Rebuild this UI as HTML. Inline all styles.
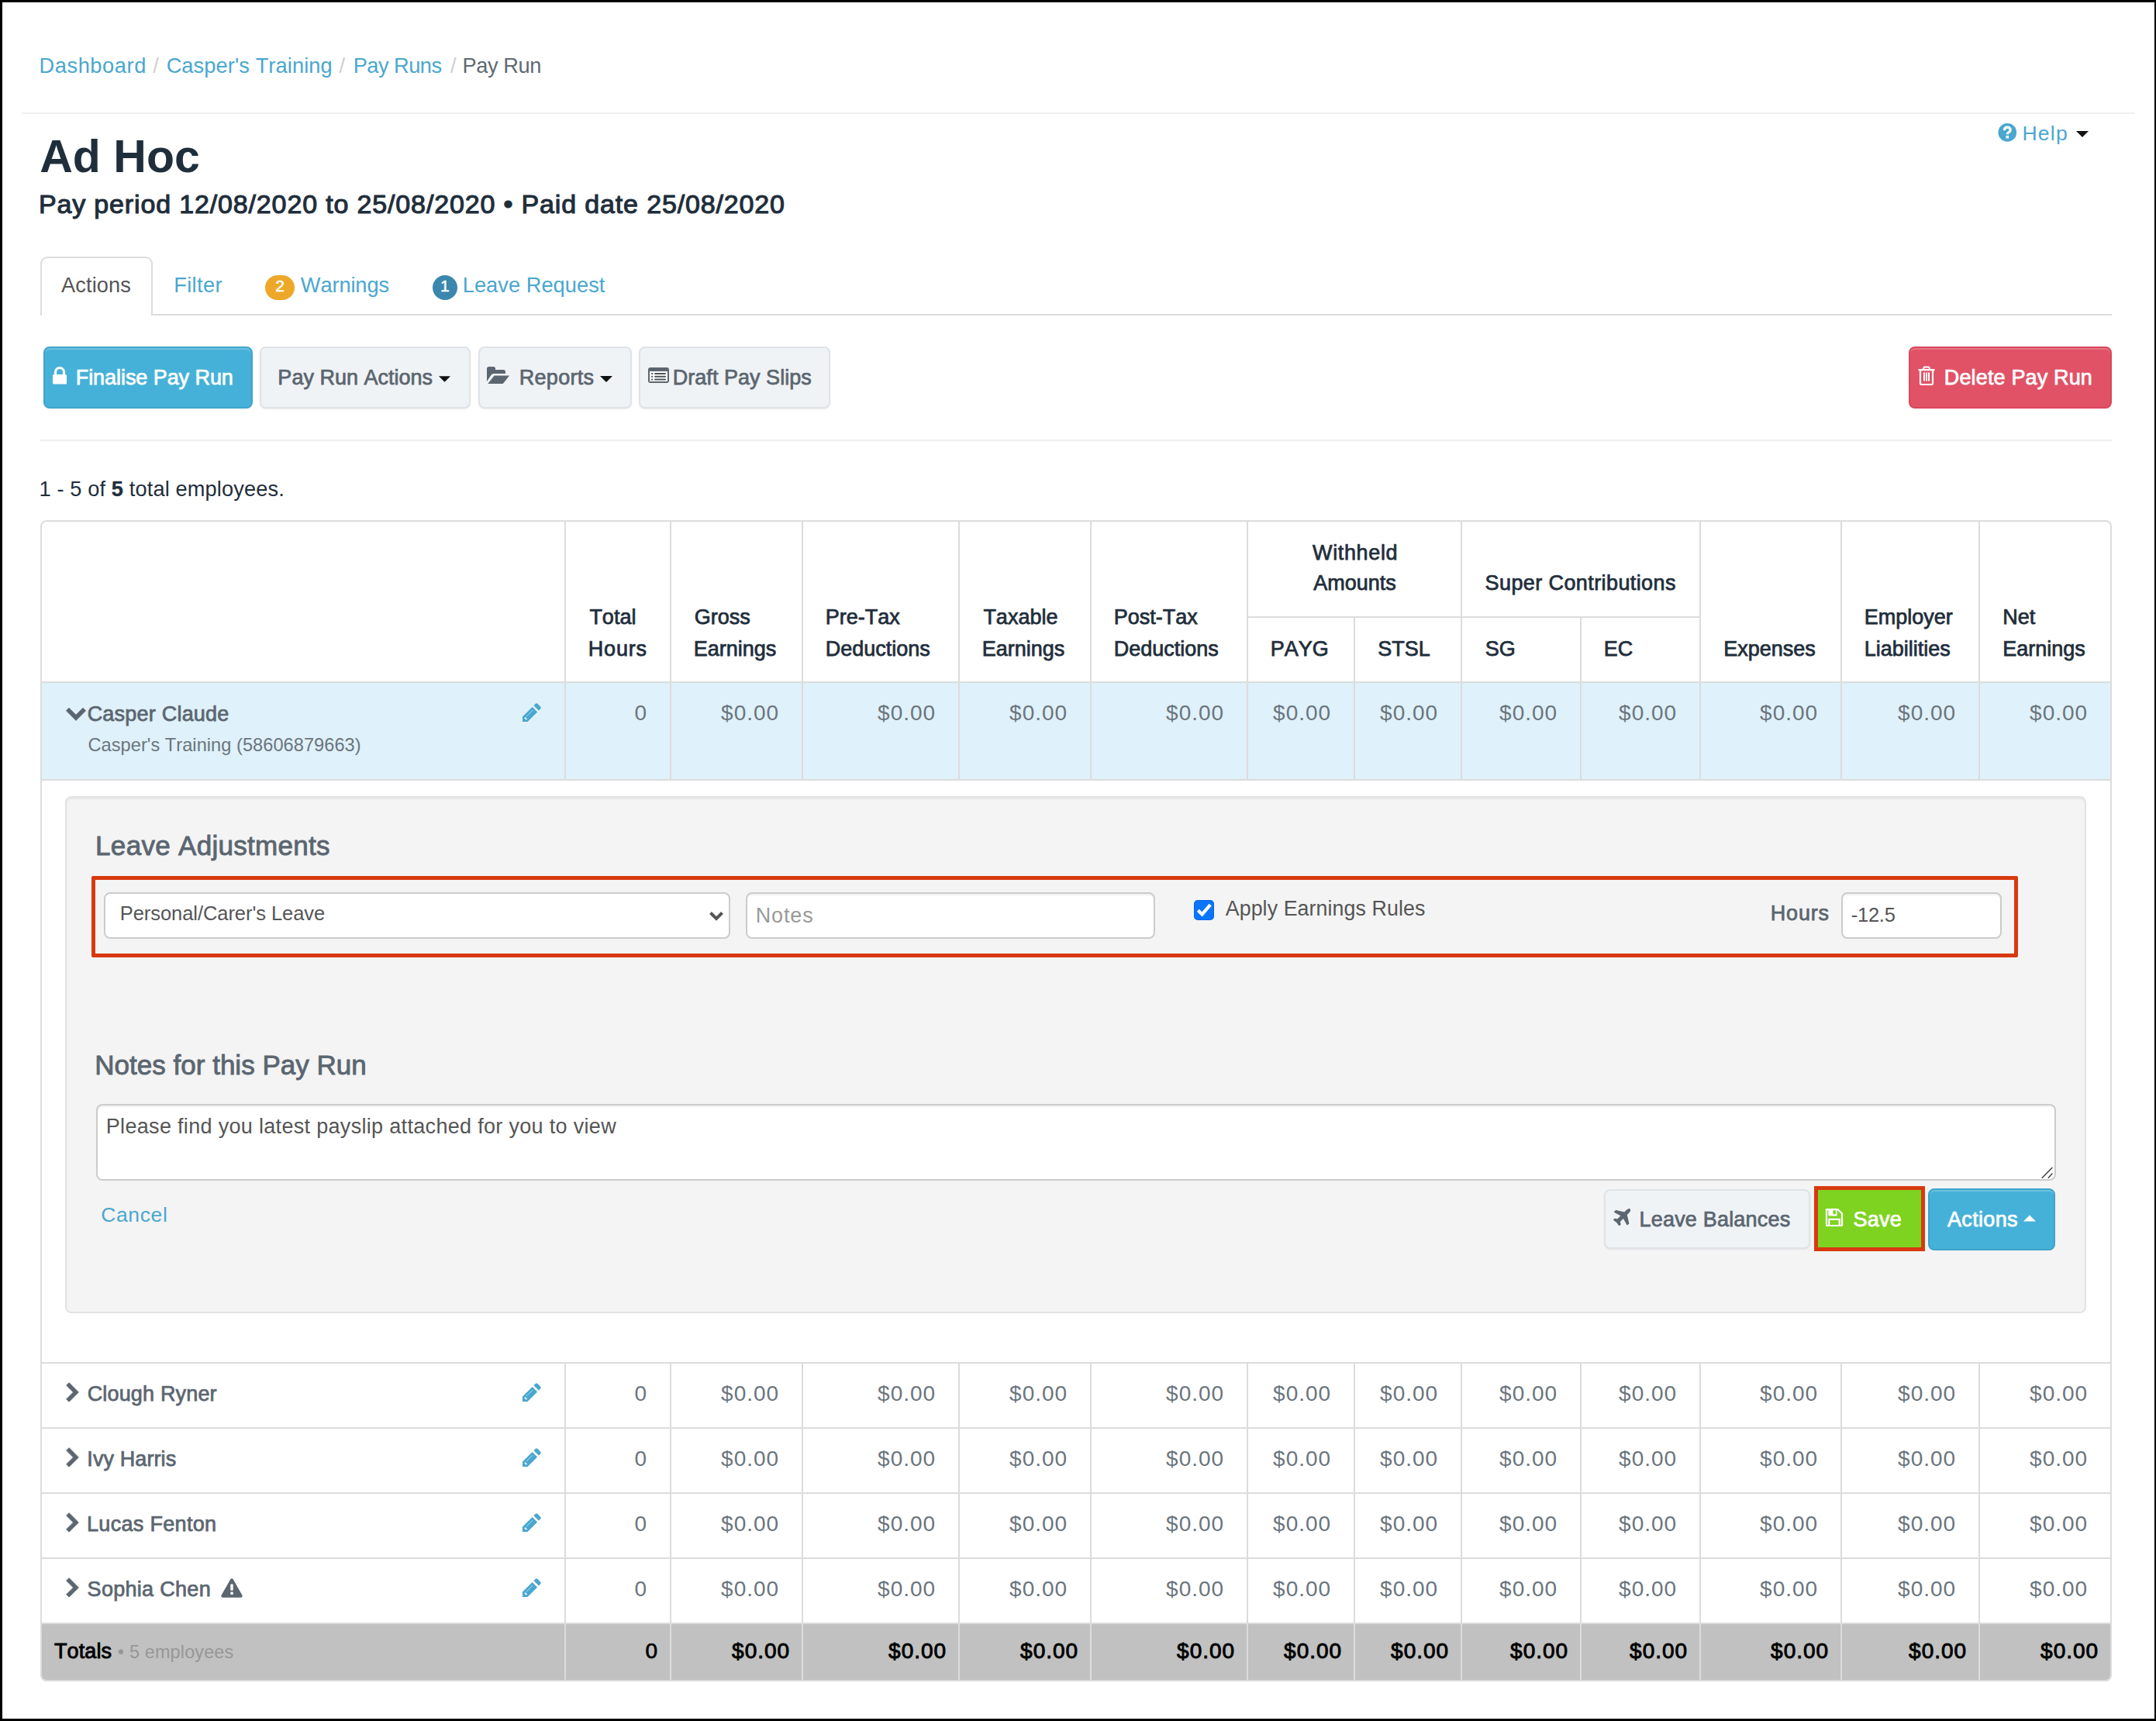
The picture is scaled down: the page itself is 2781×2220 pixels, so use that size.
<!DOCTYPE html>
<html><head><meta charset="utf-8"><title>Pay Run</title>
<style>
html,body{margin:0;padding:0;}
body{width:2781px;height:2220px;position:relative;overflow:hidden;background:#fff;font-family:"Liberation Sans", sans-serif;font-kerning:none;}
.t{position:absolute;white-space:nowrap;line-height:1;font-kerning:none;}
.r{position:absolute;}
.frame{position:absolute;left:0;top:0;width:2781px;height:2220px;box-sizing:border-box;border-style:solid;border-color:#000;border-width:3px 2px 3px 3px;z-index:10;}
</style></head><body>
<div class="t" style="left:50.46px;top:71.00px;font-size:27.2px;font-weight:normal;color:#4aa7cf;letter-spacing:0.609px;">Dashboard</div>
<div class="t" style="left:197.20px;top:71.00px;font-size:27.2px;font-weight:normal;color:#cfcfcf;letter-spacing:0.000px;">/</div>
<div class="t" style="left:214.64px;top:71.00px;font-size:27.2px;font-weight:normal;color:#4aa7cf;letter-spacing:0.115px;">Casper's Training</div>
<div class="t" style="left:437.50px;top:71.00px;font-size:27.2px;font-weight:normal;color:#cfcfcf;letter-spacing:0.000px;">/</div>
<div class="t" style="left:455.76px;top:71.00px;font-size:27.2px;font-weight:normal;color:#4aa7cf;letter-spacing:-0.521px;">Pay Runs</div>
<div class="t" style="left:581.00px;top:71.00px;font-size:27.2px;font-weight:normal;color:#cfcfcf;letter-spacing:0.000px;">/</div>
<div class="t" style="left:596.56px;top:71.00px;font-size:27.2px;font-weight:normal;color:#5f6a72;letter-spacing:-0.417px;">Pay Run</div>
<div class="r" style="left:28px;top:145px;width:2726px;height:2px;background:#eef0f2;"></div>
<div class="t" style="left:51.23px;top:173.00px;font-size:59px;font-weight:bold;color:#1f2e3b;letter-spacing:0.009px;">Ad Hoc</div>
<div class="t" style="left:49.90px;top:246.00px;font-size:34px;font-weight:normal;color:#1f2e3b;letter-spacing:0.850px;-webkit-text-stroke:1.1px #1f2e3b;">Pay period 12/08/2020 to 25/08/2020 &bull; Paid date 25/08/2020</div>
<svg class="r" style="left:2577px;top:159px;" width="25" height="25" viewBox="0 0 25 25"><circle cx="12.3" cy="11.9" r="11.8" fill="#4aa7cf"/><path d="M8.4 9.3C8.4 6.6 10.1 5.1 12.3 5.1 14.6 5.1 16.2 6.5 16.2 8.5 16.2 10.4 14.9 11.1 13.8 11.9 12.9 12.5 12.3 13 12.3 14.3" fill="none" stroke="#fff" stroke-width="3.3"/><rect x="10.5" y="16" width="3.6" height="3.5" fill="#fff"/></svg>
<div class="t" style="left:2608.41px;top:159.00px;font-size:26.5px;font-weight:normal;color:#4aa7cf;letter-spacing:1.263px;">Help</div>
<svg class="r" style="left:2678px;top:169px;" width="16" height="8" viewBox="0 0 16 8"><path d="M0 0h16L8 8z" fill="#111"/></svg>
<div class="r" style="left:52px;top:331px;width:145px;height:76px;box-sizing:border-box;border:2px solid #dddddd;border-bottom:none;border-radius:9px 9px 0 0;background:#fff;"></div>
<div class="r" style="left:197px;top:405px;width:2527px;height:2px;background:#dddddd;"></div>
<div class="t" style="left:78.93px;top:354.00px;font-size:27.2px;font-weight:normal;color:#555555;letter-spacing:0.145px;">Actions</div>
<div class="t" style="left:224.26px;top:354.00px;font-size:27.2px;font-weight:normal;color:#4aa7cf;letter-spacing:0.354px;">Filter</div>
<div class="r" style="left:342px;top:355px;width:38px;height:32px;box-sizing:border-box;border-radius:16px;background:#eea829;"></div>
<div class="t" style="left:355.17px;top:358.00px;font-size:21px;font-weight:normal;color:#ffffff;letter-spacing:0.000px;-webkit-text-stroke:0.5px #ffffff;">2</div>
<div class="t" style="left:387.86px;top:354.00px;font-size:27.2px;font-weight:normal;color:#4aa7cf;letter-spacing:-0.099px;">Warnings</div>
<div class="r" style="left:558px;top:355px;width:32px;height:32px;box-sizing:border-box;border-radius:16px;background:#3b87ae;"></div>
<div class="t" style="left:567.88px;top:358.00px;font-size:21px;font-weight:normal;color:#ffffff;letter-spacing:0.000px;-webkit-text-stroke:0.5px #ffffff;">1</div>
<div class="t" style="left:596.76px;top:354.00px;font-size:27.2px;font-weight:normal;color:#4aa7cf;letter-spacing:0.061px;">Leave Request</div>
<div class="r" style="left:56px;top:447px;width:270px;height:80px;box-sizing:border-box;background:#46b1d8;border-radius:8px;border:2px solid #3fa4ca;box-shadow:0 1px 2px rgba(0,0,0,.08);box-shadow:inset 0 2px 0 rgba(255,255,255,.22);"></div>
<svg class="r" style="left:67px;top:472px;" width="20" height="24" viewBox="0 0 20 24"><path d="M4.5 11V8a5.5 5.5 0 0 1 11 0v3" fill="none" stroke="#fff" stroke-width="3.2"/><rect x="1" y="11" width="18" height="12.5" rx="1.5" fill="#fff"/></svg>
<div class="t" style="left:97.77px;top:474.00px;font-size:27px;font-weight:normal;color:#ffffff;letter-spacing:-0.067px;-webkit-text-stroke:0.75px #ffffff;">Finalise Pay Run</div>
<div class="r" style="left:335px;top:447px;width:272px;height:80px;box-sizing:border-box;background:#f0f3f6;border-radius:8px;border:2px solid #dfe3e7;box-shadow:0 1px 2px rgba(0,0,0,.08);"></div>
<div class="t" style="left:358.37px;top:474.00px;font-size:27px;font-weight:normal;color:#5b6670;letter-spacing:0.008px;-webkit-text-stroke:0.75px #5b6670;">Pay Run Actions</div>
<svg class="r" style="left:566px;top:485px;" width="15" height="8" viewBox="0 0 16 8"><path d="M0 0h16L8 8z" fill="#111"/></svg>
<div class="r" style="left:617px;top:447px;width:198px;height:80px;box-sizing:border-box;background:#f0f3f6;border-radius:8px;border:2px solid #dfe3e7;box-shadow:0 1px 2px rgba(0,0,0,.08);"></div>
<svg class="r" style="left:627px;top:472px;" width="31" height="24" viewBox="0 0 31 24"><path d="M1 3.5C1 2 2 1 3.5 1h6C11 1 12 2 12 3.5V5h10.5C24 5 25 6 25 7.5V10H10C8 10 7 11 6 12.5L1 20z" fill="#5b6670"/><path d="M10.5 12.5h19.5L23 21.5c-.8 1-1.6 1.5-3 1.5H2.3z" fill="#5b6670"/></svg>
<div class="t" style="left:669.77px;top:474.00px;font-size:27px;font-weight:normal;color:#5b6670;letter-spacing:0.290px;-webkit-text-stroke:0.75px #5b6670;">Reports</div>
<svg class="r" style="left:774px;top:485px;" width="16" height="8" viewBox="0 0 16 8"><path d="M0 0h16L8 8z" fill="#111"/></svg>
<div class="r" style="left:824px;top:447px;width:247px;height:80px;box-sizing:border-box;background:#f0f3f6;border-radius:8px;border:2px solid #dfe3e7;box-shadow:0 1px 2px rgba(0,0,0,.08);"></div>
<svg class="r" style="left:835px;top:473px;" width="29" height="22" viewBox="0 0 29 22"><rect x="1" y="1" width="27" height="20" rx="3" fill="#5b6670"/><rect x="3" y="6" width="23" height="13" fill="#fff"/><rect x="5.2" y="8" width="2" height="2" fill="#4d555c"/><rect x="9" y="8" width="15" height="2" rx="1" fill="#4d555c"/><rect x="5.2" y="11.8" width="2" height="2" fill="#4d555c"/><rect x="9" y="11.8" width="15" height="2" rx="1" fill="#4d555c"/><rect x="5.2" y="15.6" width="2" height="2" fill="#4d555c"/><rect x="9" y="15.6" width="15" height="2" rx="1" fill="#4d555c"/></svg>
<div class="t" style="left:867.77px;top:474.00px;font-size:27px;font-weight:normal;color:#5b6670;letter-spacing:0.029px;-webkit-text-stroke:0.75px #5b6670;">Draft Pay Slips</div>
<div class="r" style="left:2462px;top:447px;width:262px;height:80px;box-sizing:border-box;background:#e15266;border-radius:8px;border:2px solid #d8485c;box-shadow:0 1px 2px rgba(0,0,0,.08);box-shadow:inset 0 2px 0 rgba(255,255,255,.2);"></div>
<svg class="r" style="left:2474px;top:472px;" width="22" height="25" viewBox="0 0 22 25"><path d="M6.5 4.5L8 1.5h6l1.5 3" fill="none" stroke="#fff" stroke-width="2"/><rect x="0.5" y="4" width="21" height="2.2" fill="#fff"/><path d="M3 6v16.5c0 1 .8 1.5 1.5 1.5h13c.8 0 1.5-.5 1.5-1.5V6" fill="none" stroke="#fff" stroke-width="2.2"/><rect x="7" y="8.5" width="2" height="11" fill="#fff"/><rect x="10" y="8.5" width="2" height="11" fill="#fff"/><rect x="13" y="8.5" width="2" height="11" fill="#fff"/></svg>
<div class="t" style="left:2507.77px;top:474.00px;font-size:27px;font-weight:normal;color:#ffffff;letter-spacing:0.152px;-webkit-text-stroke:0.75px #ffffff;">Delete Pay Run</div>
<div class="r" style="left:52px;top:567px;width:2672px;height:2px;background:#eeeeee;"></div>
<div class="t" style="left:50.46px;top:617.00px;font-size:27.2px;font-weight:normal;color:#1f2e3b;letter-spacing:0.133px;">1 - 5 of <b style="-webkit-text-stroke:0.3px #1f2e3b">5</b> total employees.</div>
<div class="r" style="left:52px;top:881px;width:2672px;height:124px;background:#dff1fa;"></div>
<div class="r" style="left:52px;top:2095px;width:2672px;height:72px;background:#c1c1c1;border-radius:0 0 8px 8px;"></div>
<div class="r" style="left:52px;top:671px;width:2672px;height:1498px;box-sizing:border-box;border:2px solid #dcdcdc;border-radius:8px;"></div>
<div class="r" style="left:1608px;top:795px;width:584px;height:2px;background:#dcdcdc;"></div>
<div class="r" style="left:52px;top:879px;width:2672px;height:2px;background:#dcdcdc;"></div>
<div class="r" style="left:52px;top:1005px;width:2672px;height:2px;background:#dcdcdc;"></div>
<div class="r" style="left:52px;top:1757px;width:2672px;height:2px;background:#dcdcdc;"></div>
<div class="r" style="left:52px;top:1841px;width:2672px;height:2px;background:#dcdcdc;"></div>
<div class="r" style="left:52px;top:1925px;width:2672px;height:2px;background:#dcdcdc;"></div>
<div class="r" style="left:52px;top:2009px;width:2672px;height:2px;background:#dcdcdc;"></div>
<div class="r" style="left:52px;top:2093px;width:2672px;height:2px;background:#dcdcdc;"></div>
<div class="r" style="left:728px;top:673px;width:2px;height:206px;background:#dcdcdc;"></div>
<div class="r" style="left:728px;top:881px;width:2px;height:124px;background:#dcdcdc;"></div>
<div class="r" style="left:728px;top:1759px;width:2px;height:408px;background:#dcdcdc;"></div>
<div class="r" style="left:864px;top:673px;width:2px;height:206px;background:#dcdcdc;"></div>
<div class="r" style="left:864px;top:881px;width:2px;height:124px;background:#dcdcdc;"></div>
<div class="r" style="left:864px;top:1759px;width:2px;height:408px;background:#dcdcdc;"></div>
<div class="r" style="left:1034px;top:673px;width:2px;height:206px;background:#dcdcdc;"></div>
<div class="r" style="left:1034px;top:881px;width:2px;height:124px;background:#dcdcdc;"></div>
<div class="r" style="left:1034px;top:1759px;width:2px;height:408px;background:#dcdcdc;"></div>
<div class="r" style="left:1236px;top:673px;width:2px;height:206px;background:#dcdcdc;"></div>
<div class="r" style="left:1236px;top:881px;width:2px;height:124px;background:#dcdcdc;"></div>
<div class="r" style="left:1236px;top:1759px;width:2px;height:408px;background:#dcdcdc;"></div>
<div class="r" style="left:1406px;top:673px;width:2px;height:206px;background:#dcdcdc;"></div>
<div class="r" style="left:1406px;top:881px;width:2px;height:124px;background:#dcdcdc;"></div>
<div class="r" style="left:1406px;top:1759px;width:2px;height:408px;background:#dcdcdc;"></div>
<div class="r" style="left:1608px;top:673px;width:2px;height:206px;background:#dcdcdc;"></div>
<div class="r" style="left:1608px;top:881px;width:2px;height:124px;background:#dcdcdc;"></div>
<div class="r" style="left:1608px;top:1759px;width:2px;height:408px;background:#dcdcdc;"></div>
<div class="r" style="left:1746px;top:797px;width:2px;height:82px;background:#dcdcdc;"></div>
<div class="r" style="left:1746px;top:881px;width:2px;height:124px;background:#dcdcdc;"></div>
<div class="r" style="left:1746px;top:1759px;width:2px;height:408px;background:#dcdcdc;"></div>
<div class="r" style="left:1884px;top:673px;width:2px;height:206px;background:#dcdcdc;"></div>
<div class="r" style="left:1884px;top:881px;width:2px;height:124px;background:#dcdcdc;"></div>
<div class="r" style="left:1884px;top:1759px;width:2px;height:408px;background:#dcdcdc;"></div>
<div class="r" style="left:2038px;top:797px;width:2px;height:82px;background:#dcdcdc;"></div>
<div class="r" style="left:2038px;top:881px;width:2px;height:124px;background:#dcdcdc;"></div>
<div class="r" style="left:2038px;top:1759px;width:2px;height:408px;background:#dcdcdc;"></div>
<div class="r" style="left:2192px;top:673px;width:2px;height:206px;background:#dcdcdc;"></div>
<div class="r" style="left:2192px;top:881px;width:2px;height:124px;background:#dcdcdc;"></div>
<div class="r" style="left:2192px;top:1759px;width:2px;height:408px;background:#dcdcdc;"></div>
<div class="r" style="left:2374px;top:673px;width:2px;height:206px;background:#dcdcdc;"></div>
<div class="r" style="left:2374px;top:881px;width:2px;height:124px;background:#dcdcdc;"></div>
<div class="r" style="left:2374px;top:1759px;width:2px;height:408px;background:#dcdcdc;"></div>
<div class="r" style="left:2552px;top:673px;width:2px;height:206px;background:#dcdcdc;"></div>
<div class="r" style="left:2552px;top:881px;width:2px;height:124px;background:#dcdcdc;"></div>
<div class="r" style="left:2552px;top:1759px;width:2px;height:408px;background:#dcdcdc;"></div>
<div class="t" style="left:760.39px;top:783.00px;font-size:27px;font-weight:normal;color:#1f2e3b;letter-spacing:0.000px;-webkit-text-stroke:0.75px #1f2e3b;">Total</div>
<div class="t" style="left:758.77px;top:824.00px;font-size:27px;font-weight:normal;color:#1f2e3b;letter-spacing:0.804px;-webkit-text-stroke:0.75px #1f2e3b;">Hours</div>
<div class="t" style="left:895.65px;top:783.00px;font-size:27px;font-weight:normal;color:#1f2e3b;letter-spacing:0.000px;-webkit-text-stroke:0.75px #1f2e3b;">Gross</div>
<div class="t" style="left:894.77px;top:824.00px;font-size:27px;font-weight:normal;color:#1f2e3b;letter-spacing:0.000px;-webkit-text-stroke:0.75px #1f2e3b;">Earnings</div>
<div class="t" style="left:1064.77px;top:783.00px;font-size:27px;font-weight:normal;color:#1f2e3b;letter-spacing:0.000px;-webkit-text-stroke:0.75px #1f2e3b;">Pre-Tax</div>
<div class="t" style="left:1064.77px;top:824.00px;font-size:27px;font-weight:normal;color:#1f2e3b;letter-spacing:0.000px;-webkit-text-stroke:0.75px #1f2e3b;">Deductions</div>
<div class="t" style="left:1268.39px;top:783.00px;font-size:27px;font-weight:normal;color:#1f2e3b;letter-spacing:0.000px;-webkit-text-stroke:0.75px #1f2e3b;">Taxable</div>
<div class="t" style="left:1266.77px;top:824.00px;font-size:27px;font-weight:normal;color:#1f2e3b;letter-spacing:0.000px;-webkit-text-stroke:0.75px #1f2e3b;">Earnings</div>
<div class="t" style="left:1436.77px;top:783.00px;font-size:27px;font-weight:normal;color:#1f2e3b;letter-spacing:0.000px;-webkit-text-stroke:0.75px #1f2e3b;">Post-Tax</div>
<div class="t" style="left:1436.77px;top:824.00px;font-size:27px;font-weight:normal;color:#1f2e3b;letter-spacing:0.000px;-webkit-text-stroke:0.75px #1f2e3b;">Deductions</div>
<div class="t" style="left:1693.12px;top:700.00px;font-size:27px;font-weight:normal;color:#1f2e3b;letter-spacing:0.623px;-webkit-text-stroke:0.75px #1f2e3b;">Withheld</div>
<div class="t" style="left:1694.21px;top:739.00px;font-size:27px;font-weight:normal;color:#1f2e3b;letter-spacing:0.000px;-webkit-text-stroke:0.75px #1f2e3b;">Amounts</div>
<div class="t" style="left:1915.59px;top:739.00px;font-size:27px;font-weight:normal;color:#1f2e3b;letter-spacing:0.401px;-webkit-text-stroke:0.75px #1f2e3b;">Super Contributions</div>
<div class="t" style="left:1638.77px;top:824.00px;font-size:27px;font-weight:normal;color:#1f2e3b;letter-spacing:0.000px;-webkit-text-stroke:0.75px #1f2e3b;">PAYG</div>
<div class="t" style="left:1777.29px;top:824.00px;font-size:27px;font-weight:normal;color:#1f2e3b;letter-spacing:0.000px;-webkit-text-stroke:0.75px #1f2e3b;">STSL</div>
<div class="t" style="left:1915.79px;top:824.00px;font-size:27px;font-weight:normal;color:#1f2e3b;letter-spacing:0.000px;-webkit-text-stroke:0.75px #1f2e3b;">SG</div>
<div class="t" style="left:2068.77px;top:824.00px;font-size:27px;font-weight:normal;color:#1f2e3b;letter-spacing:0.000px;-webkit-text-stroke:0.75px #1f2e3b;">EC</div>
<div class="t" style="left:2223.27px;top:824.00px;font-size:27px;font-weight:normal;color:#1f2e3b;letter-spacing:0.000px;-webkit-text-stroke:0.75px #1f2e3b;">Expenses</div>
<div class="t" style="left:2404.77px;top:783.00px;font-size:27px;font-weight:normal;color:#1f2e3b;letter-spacing:0.000px;-webkit-text-stroke:0.75px #1f2e3b;">Employer</div>
<div class="t" style="left:2404.77px;top:824.00px;font-size:27px;font-weight:normal;color:#1f2e3b;letter-spacing:0.000px;-webkit-text-stroke:0.75px #1f2e3b;">Liabilities</div>
<div class="t" style="left:2583.27px;top:783.00px;font-size:27px;font-weight:normal;color:#1f2e3b;letter-spacing:0.000px;-webkit-text-stroke:0.75px #1f2e3b;">Net</div>
<div class="t" style="left:2583.27px;top:824.00px;font-size:27px;font-weight:normal;color:#1f2e3b;letter-spacing:0.000px;-webkit-text-stroke:0.75px #1f2e3b;">Earnings</div>
<svg class="r" style="left:84px;top:911px;" width="28" height="20" viewBox="0 0 28 20"><path d="M1.4 5.7L4.9 2.2 14 11.2 23 2.2 26.6 5.8 14 18.4z" fill="#5b6670" stroke="#5b6670" stroke-width="0.8" stroke-linejoin="round"/></svg>
<div class="t" style="left:112.65px;top:908.00px;font-size:27px;font-weight:normal;color:#5b6670;letter-spacing:0.217px;-webkit-text-stroke:0.75px #5b6670;">Casper Claude</div>
<div class="t" style="left:113.52px;top:950.00px;font-size:23.6px;font-weight:normal;color:#6b757d;letter-spacing:0.044px;">Casper's Training (58606879663)</div>
<svg class="r" style="left:674px;top:907px;" width="24" height="24" viewBox="0 0 24 24"><path d="M0 24V17.5L12.6 4.9 19.1 11.4 6.5 24z" fill="#4aa7cf"/><path d="M14.4 3.1l2.1-2.1c.9-.9 2.2-.9 3.1 0l3.4 3.4c.9.9.9 2.2 0 3.1l-2.1 2.1z" fill="#4aa7cf"/><path d="M2.2 19.2l1.3-1.3 2.6 2.6-1.3 1.3z" fill="#e8f8fc"/><path d="M5 17.2L13 9.2" stroke="#bff3ff" stroke-width="0.8"/></svg>
<div class="t" style="left:818.51px;top:906.00px;font-size:28px;font-weight:normal;color:#6b757d;letter-spacing:0.000px;">0</div>
<div class="t" style="left:930.12px;top:906.00px;font-size:28px;font-weight:normal;color:#6b757d;letter-spacing:1.000px;">$0.00</div>
<div class="t" style="left:1132.12px;top:906.00px;font-size:28px;font-weight:normal;color:#6b757d;letter-spacing:1.000px;">$0.00</div>
<div class="t" style="left:1302.12px;top:906.00px;font-size:28px;font-weight:normal;color:#6b757d;letter-spacing:1.000px;">$0.00</div>
<div class="t" style="left:1504.12px;top:906.00px;font-size:28px;font-weight:normal;color:#6b757d;letter-spacing:1.000px;">$0.00</div>
<div class="t" style="left:1642.12px;top:906.00px;font-size:28px;font-weight:normal;color:#6b757d;letter-spacing:1.000px;">$0.00</div>
<div class="t" style="left:1780.12px;top:906.00px;font-size:28px;font-weight:normal;color:#6b757d;letter-spacing:1.000px;">$0.00</div>
<div class="t" style="left:1934.12px;top:906.00px;font-size:28px;font-weight:normal;color:#6b757d;letter-spacing:1.000px;">$0.00</div>
<div class="t" style="left:2088.12px;top:906.00px;font-size:28px;font-weight:normal;color:#6b757d;letter-spacing:1.000px;">$0.00</div>
<div class="t" style="left:2270.12px;top:906.00px;font-size:28px;font-weight:normal;color:#6b757d;letter-spacing:1.000px;">$0.00</div>
<div class="t" style="left:2448.12px;top:906.00px;font-size:28px;font-weight:normal;color:#6b757d;letter-spacing:1.000px;">$0.00</div>
<div class="t" style="left:2618.12px;top:906.00px;font-size:28px;font-weight:normal;color:#6b757d;letter-spacing:1.000px;">$0.00</div>
<svg class="r" style="left:84px;top:1782.9px;" width="20" height="27" viewBox="0 0 20 27"><path d="M1.6 4.1L5.1 0.6 17.4 12.9 5.1 25.2 1.6 21.8 10.5 12.9z" fill="#5b6670" stroke="#5b6670" stroke-width="0.8" stroke-linejoin="round"/></svg>
<div class="t" style="left:112.65px;top:1785.00px;font-size:27px;font-weight:normal;color:#5b6670;letter-spacing:0.168px;-webkit-text-stroke:0.75px #5b6670;">Clough Ryner</div>
<svg class="r" style="left:674px;top:1784px;" width="24" height="24" viewBox="0 0 24 24"><path d="M0 24V17.5L12.6 4.9 19.1 11.4 6.5 24z" fill="#4aa7cf"/><path d="M14.4 3.1l2.1-2.1c.9-.9 2.2-.9 3.1 0l3.4 3.4c.9.9.9 2.2 0 3.1l-2.1 2.1z" fill="#4aa7cf"/><path d="M2.2 19.2l1.3-1.3 2.6 2.6-1.3 1.3z" fill="#e8f8fc"/><path d="M5 17.2L13 9.2" stroke="#bff3ff" stroke-width="0.8"/></svg>
<div class="t" style="left:818.51px;top:1784.00px;font-size:28px;font-weight:normal;color:#6b757d;letter-spacing:0.000px;">0</div>
<div class="t" style="left:930.12px;top:1784.00px;font-size:28px;font-weight:normal;color:#6b757d;letter-spacing:1.000px;">$0.00</div>
<div class="t" style="left:1132.12px;top:1784.00px;font-size:28px;font-weight:normal;color:#6b757d;letter-spacing:1.000px;">$0.00</div>
<div class="t" style="left:1302.12px;top:1784.00px;font-size:28px;font-weight:normal;color:#6b757d;letter-spacing:1.000px;">$0.00</div>
<div class="t" style="left:1504.12px;top:1784.00px;font-size:28px;font-weight:normal;color:#6b757d;letter-spacing:1.000px;">$0.00</div>
<div class="t" style="left:1642.12px;top:1784.00px;font-size:28px;font-weight:normal;color:#6b757d;letter-spacing:1.000px;">$0.00</div>
<div class="t" style="left:1780.12px;top:1784.00px;font-size:28px;font-weight:normal;color:#6b757d;letter-spacing:1.000px;">$0.00</div>
<div class="t" style="left:1934.12px;top:1784.00px;font-size:28px;font-weight:normal;color:#6b757d;letter-spacing:1.000px;">$0.00</div>
<div class="t" style="left:2088.12px;top:1784.00px;font-size:28px;font-weight:normal;color:#6b757d;letter-spacing:1.000px;">$0.00</div>
<div class="t" style="left:2270.12px;top:1784.00px;font-size:28px;font-weight:normal;color:#6b757d;letter-spacing:1.000px;">$0.00</div>
<div class="t" style="left:2448.12px;top:1784.00px;font-size:28px;font-weight:normal;color:#6b757d;letter-spacing:1.000px;">$0.00</div>
<div class="t" style="left:2618.12px;top:1784.00px;font-size:28px;font-weight:normal;color:#6b757d;letter-spacing:1.000px;">$0.00</div>
<svg class="r" style="left:84px;top:1867.0px;" width="20" height="27" viewBox="0 0 20 27"><path d="M1.6 4.1L5.1 0.6 17.4 12.9 5.1 25.2 1.6 21.8 10.5 12.9z" fill="#5b6670" stroke="#5b6670" stroke-width="0.8" stroke-linejoin="round"/></svg>
<div class="t" style="left:112.30px;top:1869.00px;font-size:27px;font-weight:normal;color:#5b6670;letter-spacing:0.100px;-webkit-text-stroke:0.75px #5b6670;">Ivy Harris</div>
<svg class="r" style="left:674px;top:1868px;" width="24" height="24" viewBox="0 0 24 24"><path d="M0 24V17.5L12.6 4.9 19.1 11.4 6.5 24z" fill="#4aa7cf"/><path d="M14.4 3.1l2.1-2.1c.9-.9 2.2-.9 3.1 0l3.4 3.4c.9.9.9 2.2 0 3.1l-2.1 2.1z" fill="#4aa7cf"/><path d="M2.2 19.2l1.3-1.3 2.6 2.6-1.3 1.3z" fill="#e8f8fc"/><path d="M5 17.2L13 9.2" stroke="#bff3ff" stroke-width="0.8"/></svg>
<div class="t" style="left:818.51px;top:1868.00px;font-size:28px;font-weight:normal;color:#6b757d;letter-spacing:0.000px;">0</div>
<div class="t" style="left:930.12px;top:1868.00px;font-size:28px;font-weight:normal;color:#6b757d;letter-spacing:1.000px;">$0.00</div>
<div class="t" style="left:1132.12px;top:1868.00px;font-size:28px;font-weight:normal;color:#6b757d;letter-spacing:1.000px;">$0.00</div>
<div class="t" style="left:1302.12px;top:1868.00px;font-size:28px;font-weight:normal;color:#6b757d;letter-spacing:1.000px;">$0.00</div>
<div class="t" style="left:1504.12px;top:1868.00px;font-size:28px;font-weight:normal;color:#6b757d;letter-spacing:1.000px;">$0.00</div>
<div class="t" style="left:1642.12px;top:1868.00px;font-size:28px;font-weight:normal;color:#6b757d;letter-spacing:1.000px;">$0.00</div>
<div class="t" style="left:1780.12px;top:1868.00px;font-size:28px;font-weight:normal;color:#6b757d;letter-spacing:1.000px;">$0.00</div>
<div class="t" style="left:1934.12px;top:1868.00px;font-size:28px;font-weight:normal;color:#6b757d;letter-spacing:1.000px;">$0.00</div>
<div class="t" style="left:2088.12px;top:1868.00px;font-size:28px;font-weight:normal;color:#6b757d;letter-spacing:1.000px;">$0.00</div>
<div class="t" style="left:2270.12px;top:1868.00px;font-size:28px;font-weight:normal;color:#6b757d;letter-spacing:1.000px;">$0.00</div>
<div class="t" style="left:2448.12px;top:1868.00px;font-size:28px;font-weight:normal;color:#6b757d;letter-spacing:1.000px;">$0.00</div>
<div class="t" style="left:2618.12px;top:1868.00px;font-size:28px;font-weight:normal;color:#6b757d;letter-spacing:1.000px;">$0.00</div>
<svg class="r" style="left:84px;top:1950.8px;" width="20" height="27" viewBox="0 0 20 27"><path d="M1.6 4.1L5.1 0.6 17.4 12.9 5.1 25.2 1.6 21.8 10.5 12.9z" fill="#5b6670" stroke="#5b6670" stroke-width="0.8" stroke-linejoin="round"/></svg>
<div class="t" style="left:111.97px;top:1953.00px;font-size:27px;font-weight:normal;color:#5b6670;letter-spacing:0.324px;-webkit-text-stroke:0.75px #5b6670;">Lucas Fenton</div>
<svg class="r" style="left:674px;top:1952px;" width="24" height="24" viewBox="0 0 24 24"><path d="M0 24V17.5L12.6 4.9 19.1 11.4 6.5 24z" fill="#4aa7cf"/><path d="M14.4 3.1l2.1-2.1c.9-.9 2.2-.9 3.1 0l3.4 3.4c.9.9.9 2.2 0 3.1l-2.1 2.1z" fill="#4aa7cf"/><path d="M2.2 19.2l1.3-1.3 2.6 2.6-1.3 1.3z" fill="#e8f8fc"/><path d="M5 17.2L13 9.2" stroke="#bff3ff" stroke-width="0.8"/></svg>
<div class="t" style="left:818.51px;top:1952.00px;font-size:28px;font-weight:normal;color:#6b757d;letter-spacing:0.000px;">0</div>
<div class="t" style="left:930.12px;top:1952.00px;font-size:28px;font-weight:normal;color:#6b757d;letter-spacing:1.000px;">$0.00</div>
<div class="t" style="left:1132.12px;top:1952.00px;font-size:28px;font-weight:normal;color:#6b757d;letter-spacing:1.000px;">$0.00</div>
<div class="t" style="left:1302.12px;top:1952.00px;font-size:28px;font-weight:normal;color:#6b757d;letter-spacing:1.000px;">$0.00</div>
<div class="t" style="left:1504.12px;top:1952.00px;font-size:28px;font-weight:normal;color:#6b757d;letter-spacing:1.000px;">$0.00</div>
<div class="t" style="left:1642.12px;top:1952.00px;font-size:28px;font-weight:normal;color:#6b757d;letter-spacing:1.000px;">$0.00</div>
<div class="t" style="left:1780.12px;top:1952.00px;font-size:28px;font-weight:normal;color:#6b757d;letter-spacing:1.000px;">$0.00</div>
<div class="t" style="left:1934.12px;top:1952.00px;font-size:28px;font-weight:normal;color:#6b757d;letter-spacing:1.000px;">$0.00</div>
<div class="t" style="left:2088.12px;top:1952.00px;font-size:28px;font-weight:normal;color:#6b757d;letter-spacing:1.000px;">$0.00</div>
<div class="t" style="left:2270.12px;top:1952.00px;font-size:28px;font-weight:normal;color:#6b757d;letter-spacing:1.000px;">$0.00</div>
<div class="t" style="left:2448.12px;top:1952.00px;font-size:28px;font-weight:normal;color:#6b757d;letter-spacing:1.000px;">$0.00</div>
<div class="t" style="left:2618.12px;top:1952.00px;font-size:28px;font-weight:normal;color:#6b757d;letter-spacing:1.000px;">$0.00</div>
<svg class="r" style="left:84px;top:2034.8px;" width="20" height="27" viewBox="0 0 20 27"><path d="M1.6 4.1L5.1 0.6 17.4 12.9 5.1 25.2 1.6 21.8 10.5 12.9z" fill="#5b6670" stroke="#5b6670" stroke-width="0.8" stroke-linejoin="round"/></svg>
<div class="t" style="left:112.58px;top:2037.00px;font-size:27px;font-weight:normal;color:#5b6670;letter-spacing:0.298px;-webkit-text-stroke:0.75px #5b6670;">Sophia Chen</div>
<svg class="r" style="left:674px;top:2036px;" width="24" height="24" viewBox="0 0 24 24"><path d="M0 24V17.5L12.6 4.9 19.1 11.4 6.5 24z" fill="#4aa7cf"/><path d="M14.4 3.1l2.1-2.1c.9-.9 2.2-.9 3.1 0l3.4 3.4c.9.9.9 2.2 0 3.1l-2.1 2.1z" fill="#4aa7cf"/><path d="M2.2 19.2l1.3-1.3 2.6 2.6-1.3 1.3z" fill="#e8f8fc"/><path d="M5 17.2L13 9.2" stroke="#bff3ff" stroke-width="0.8"/></svg>
<div class="t" style="left:818.51px;top:2036.00px;font-size:28px;font-weight:normal;color:#6b757d;letter-spacing:0.000px;">0</div>
<div class="t" style="left:930.12px;top:2036.00px;font-size:28px;font-weight:normal;color:#6b757d;letter-spacing:1.000px;">$0.00</div>
<div class="t" style="left:1132.12px;top:2036.00px;font-size:28px;font-weight:normal;color:#6b757d;letter-spacing:1.000px;">$0.00</div>
<div class="t" style="left:1302.12px;top:2036.00px;font-size:28px;font-weight:normal;color:#6b757d;letter-spacing:1.000px;">$0.00</div>
<div class="t" style="left:1504.12px;top:2036.00px;font-size:28px;font-weight:normal;color:#6b757d;letter-spacing:1.000px;">$0.00</div>
<div class="t" style="left:1642.12px;top:2036.00px;font-size:28px;font-weight:normal;color:#6b757d;letter-spacing:1.000px;">$0.00</div>
<div class="t" style="left:1780.12px;top:2036.00px;font-size:28px;font-weight:normal;color:#6b757d;letter-spacing:1.000px;">$0.00</div>
<div class="t" style="left:1934.12px;top:2036.00px;font-size:28px;font-weight:normal;color:#6b757d;letter-spacing:1.000px;">$0.00</div>
<div class="t" style="left:2088.12px;top:2036.00px;font-size:28px;font-weight:normal;color:#6b757d;letter-spacing:1.000px;">$0.00</div>
<div class="t" style="left:2270.12px;top:2036.00px;font-size:28px;font-weight:normal;color:#6b757d;letter-spacing:1.000px;">$0.00</div>
<div class="t" style="left:2448.12px;top:2036.00px;font-size:28px;font-weight:normal;color:#6b757d;letter-spacing:1.000px;">$0.00</div>
<div class="t" style="left:2618.12px;top:2036.00px;font-size:28px;font-weight:normal;color:#6b757d;letter-spacing:1.000px;">$0.00</div>
<svg class="r" style="left:285px;top:2035px;" width="28" height="26" viewBox="0 0 28 26"><path d="M14 1.2c.8 0 1.4.4 1.8 1.1l11.6 20.5c.8 1.4-.2 3-1.8 3H2.4c-1.6 0-2.6-1.6-1.8-3L12.2 2.3c.4-.7 1-1.1 1.8-1.1z" fill="#5b6670"/><rect x="12.3" y="8.5" width="3.4" height="8" fill="#fff"/><rect x="12.3" y="18.5" width="3.4" height="3.4" fill="#fff"/></svg>
<div class="t" style="left:69.99px;top:2117.00px;font-size:27px;font-weight:normal;color:#000000;letter-spacing:0.116px;-webkit-text-stroke:0.9px #000000;">Totals</div>
<div class="t" style="left:151.86px;top:2120.00px;font-size:23.4px;font-weight:normal;color:#979797;letter-spacing:0.172px;">&bull; 5 employees</div>
<div class="t" style="left:832.51px;top:2116.00px;font-size:28px;font-weight:normal;color:#000000;letter-spacing:0.000px;-webkit-text-stroke:0.75px #000000;">0</div>
<div class="t" style="left:944.12px;top:2116.00px;font-size:28px;font-weight:normal;color:#000000;letter-spacing:1.000px;-webkit-text-stroke:0.9px #000000;">$0.00</div>
<div class="t" style="left:1146.12px;top:2116.00px;font-size:28px;font-weight:normal;color:#000000;letter-spacing:1.000px;-webkit-text-stroke:0.9px #000000;">$0.00</div>
<div class="t" style="left:1316.12px;top:2116.00px;font-size:28px;font-weight:normal;color:#000000;letter-spacing:1.000px;-webkit-text-stroke:0.9px #000000;">$0.00</div>
<div class="t" style="left:1518.12px;top:2116.00px;font-size:28px;font-weight:normal;color:#000000;letter-spacing:1.000px;-webkit-text-stroke:0.9px #000000;">$0.00</div>
<div class="t" style="left:1656.12px;top:2116.00px;font-size:28px;font-weight:normal;color:#000000;letter-spacing:1.000px;-webkit-text-stroke:0.9px #000000;">$0.00</div>
<div class="t" style="left:1794.12px;top:2116.00px;font-size:28px;font-weight:normal;color:#000000;letter-spacing:1.000px;-webkit-text-stroke:0.9px #000000;">$0.00</div>
<div class="t" style="left:1948.12px;top:2116.00px;font-size:28px;font-weight:normal;color:#000000;letter-spacing:1.000px;-webkit-text-stroke:0.9px #000000;">$0.00</div>
<div class="t" style="left:2102.12px;top:2116.00px;font-size:28px;font-weight:normal;color:#000000;letter-spacing:1.000px;-webkit-text-stroke:0.9px #000000;">$0.00</div>
<div class="t" style="left:2284.12px;top:2116.00px;font-size:28px;font-weight:normal;color:#000000;letter-spacing:1.000px;-webkit-text-stroke:0.9px #000000;">$0.00</div>
<div class="t" style="left:2462.12px;top:2116.00px;font-size:28px;font-weight:normal;color:#000000;letter-spacing:1.000px;-webkit-text-stroke:0.9px #000000;">$0.00</div>
<div class="t" style="left:2632.12px;top:2116.00px;font-size:28px;font-weight:normal;color:#000000;letter-spacing:1.000px;-webkit-text-stroke:0.9px #000000;">$0.00</div>
<div class="r" style="left:84px;top:1027px;width:2607px;height:667px;box-sizing:border-box;background:#f4f4f4;border:2px solid #e3e3e3;border-radius:8px;box-shadow:inset 0 2px 2px rgba(0,0,0,.05);"></div>
<div class="t" style="left:123.11px;top:1073.00px;font-size:35px;font-weight:normal;color:#5b6670;letter-spacing:0.299px;-webkit-text-stroke:0.9px #5b6670;">Leave Adjustments</div>
<div class="r" style="left:118px;top:1130px;width:2485px;height:105px;box-sizing:border-box;border:5px solid #d8390f;border-radius:2px;"></div>
<div class="r" style="left:134px;top:1151px;width:808px;height:60px;box-sizing:border-box;background:#fff;border:2px solid #cccccc;border-radius:8px;"></div>
<div class="t" style="left:154.70px;top:1166.00px;font-size:25.5px;font-weight:normal;color:#555555;letter-spacing:-0.054px;">Personal/Carer's Leave</div>
<svg class="r" style="left:914px;top:1175px;" width="20" height="13" viewBox="0 0 20 13"><path d="M2.5 2.5l7.5 7.5 7.5-7.5" fill="none" stroke="#555" stroke-width="4"/></svg>
<div class="r" style="left:962px;top:1151px;width:528px;height:60px;box-sizing:border-box;background:#fff;border:2px solid #cccccc;border-radius:8px;box-shadow:inset 0 2px 2px rgba(0,0,0,.06);"></div>
<div class="t" style="left:974.77px;top:1168.00px;font-size:27px;font-weight:normal;color:#999999;letter-spacing:0.851px;">Notes</div>
<div class="r" style="left:1540px;top:1161px;width:26px;height:26px;box-sizing:border-box;background:#0b74fc;border-radius:5px;box-shadow:inset 0 0 0 1px rgba(0,60,160,.25);"></div>
<svg class="r" style="left:1540px;top:1161px;" width="26" height="26" viewBox="0 0 26 26"><path d="M5.3 13.2L10.6 18.4 21.2 6.1" fill="none" stroke="#fff" stroke-width="4.2" stroke-linejoin="miter"/></svg>
<div class="t" style="left:1580.73px;top:1159.00px;font-size:26.8px;font-weight:normal;color:#555555;letter-spacing:0.074px;">Apply Earnings Rules</div>
<div class="t" style="left:2283.77px;top:1165.00px;font-size:27px;font-weight:normal;color:#5b6670;letter-spacing:0.804px;-webkit-text-stroke:0.75px #5b6670;">Hours</div>
<div class="r" style="left:2375px;top:1151px;width:207px;height:60px;box-sizing:border-box;background:#fff;border:2px solid #cccccc;border-radius:8px;box-shadow:inset 0 2px 2px rgba(0,0,0,.06);"></div>
<div class="t" style="left:2387.65px;top:1168.00px;font-size:25.5px;font-weight:normal;color:#555555;letter-spacing:-0.211px;">-12.5</div>
<div class="t" style="left:122.31px;top:1356.00px;font-size:35px;font-weight:normal;color:#5b6670;letter-spacing:0.012px;-webkit-text-stroke:0.9px #5b6670;">Notes for this Pay Run</div>
<div class="r" style="left:124px;top:1424px;width:2528px;height:99px;box-sizing:border-box;background:#fff;border:2px solid #cccccc;border-radius:8px;box-shadow:inset 0 2px 2px rgba(0,0,0,.06);"></div>
<div class="t" style="left:136.77px;top:1440.00px;font-size:27px;font-weight:normal;color:#555555;letter-spacing:0.316px;">Please find you latest payslip attached for you to view</div>
<svg class="r" style="left:2633px;top:1504px;" width="16" height="17" viewBox="0 0 16 17"><path d="M1.2 15.2L14 2.2M9.2 15.2L14 10.1" stroke="#444" stroke-width="1.5" stroke-linecap="round"/></svg>
<div class="t" style="left:130.18px;top:1554.00px;font-size:26.5px;font-weight:normal;color:#4aa7cf;letter-spacing:0.640px;">Cancel</div>
<div class="r" style="left:2069px;top:1534px;width:266px;height:77px;box-sizing:border-box;background:#f0f3f6;border-radius:8px;border:2px solid #dfe3e7;box-shadow:0 1px 2px rgba(0,0,0,.08);"></div>
<svg class="r" style="left:2080px;top:1559px;left:2080.5px;top:1559.2px;width:22.3px;height:22.3px;" width="23" height="23" viewBox="191.9 134.5 1401.5 1401.5"><path d="M1568 160q44 52 12 148t-108 172l-161 161 160 696q5 19-12 33l-128 96q-7 6-19 6-4 0-7-1-15-3-21-16l-279-508-259 259 53 194q5 17-8 31l-96 96q-9 9-23 9h-2q-15-2-24-13l-189-252-252-189q-11-7-13-23-1-13 9-25l96-97q9-9 23-9 6 0 8 1l194 53 259-259-508-279q-14-8-17-24-2-16 9-27l128-128q14-13 30-8l665 159 160-160q76-76 172-108t148 12z" fill="#5b6670"/></svg>
<div class="t" style="left:2114.57px;top:1560.00px;font-size:27px;font-weight:normal;color:#5b6670;letter-spacing:0.190px;-webkit-text-stroke:0.75px #5b6670;">Leave Balances</div>
<div class="r" style="left:2340px;top:1530px;width:143px;height:84px;box-sizing:border-box;background:#7ed321;border:5px solid #d8390f;"></div>
<svg class="r" style="left:2354px;top:1558px;" width="24" height="25" viewBox="0 0 24 25"><path d="M2 2.2h14.8L22 7.5V23H2z" fill="none" stroke="#fff" stroke-width="2.2" stroke-linejoin="round"/><rect x="4.3" y="2" width="11.4" height="8.6" rx="1" fill="#fff"/><rect x="10.4" y="3.2" width="3.5" height="5.1" fill="#7ed321"/><path d="M5.3 23v-8.2h13.4V23" fill="none" stroke="#fff" stroke-width="2.2"/></svg>
<div class="t" style="left:2390.59px;top:1560.00px;font-size:27px;font-weight:normal;color:#ffffff;letter-spacing:0.190px;-webkit-text-stroke:0.75px #ffffff;">Save</div>
<div class="r" style="left:2487px;top:1533px;width:164px;height:80px;box-sizing:border-box;background:#46b1d8;border-radius:8px;border:2px solid #3fa4ca;box-shadow:0 1px 2px rgba(0,0,0,.08);box-shadow:inset 0 2px 0 rgba(255,255,255,.22);"></div>
<div class="t" style="left:2511.93px;top:1560.00px;font-size:27px;font-weight:normal;color:#ffffff;letter-spacing:0.353px;-webkit-text-stroke:0.75px #ffffff;">Actions</div>
<svg class="r" style="left:2610px;top:1567px;" width="16" height="9" viewBox="0 0 16 8"><path d="M0 8h16L8 0z" fill="#fff"/></svg>
<div class="frame"></div>
</body></html>
